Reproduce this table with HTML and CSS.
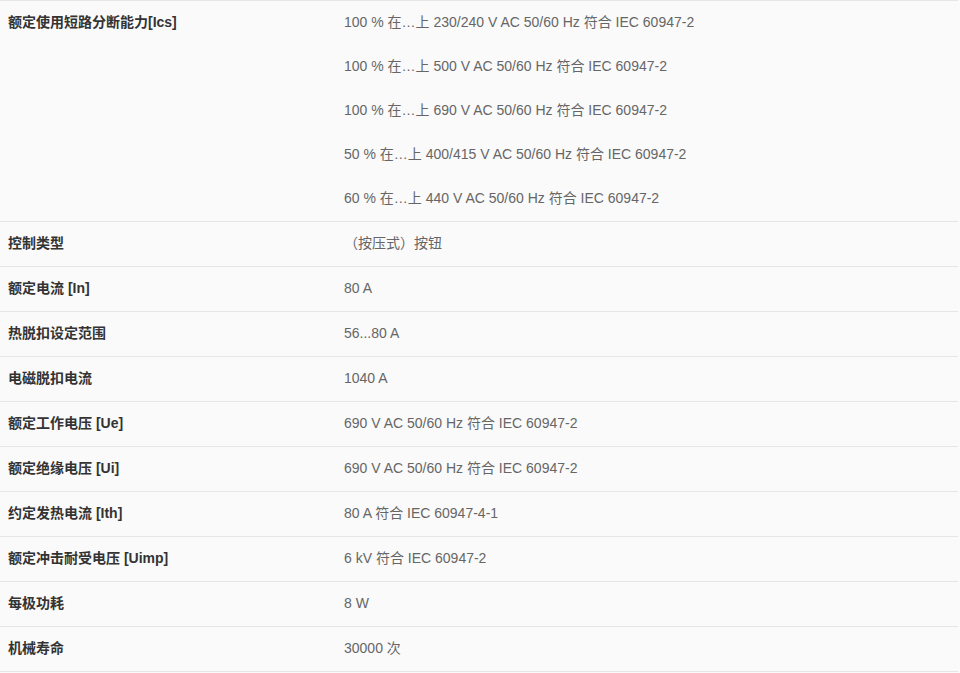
FILE: index.html
```html
<!DOCTYPE html>
<html lang="zh-CN">
<head>
<meta charset="utf-8">
<title>技术参数</title>
<link rel="stylesheet" href="styles.css">
</head>
<body>
<table class="specs">
  <tbody>
    <tr>
      <th>额定使用短路分断能力[Ics]</th>
      <td>
        <div class="val">100 % 在…上 230/240 V AC 50/60 Hz 符合 IEC 60947-2</div>
        <div class="val">100 % 在…上 500 V AC 50/60 Hz 符合 IEC 60947-2</div>
        <div class="val">100 % 在…上 690 V AC 50/60 Hz 符合 IEC 60947-2</div>
        <div class="val">50 % 在…上 400/415 V AC 50/60 Hz 符合 IEC 60947-2</div>
        <div class="val">60 % 在…上 440 V AC 50/60 Hz 符合 IEC 60947-2</div>
      </td>
    </tr>
    <tr><th>控制类型</th><td>（按压式）按钮</td></tr>
    <tr><th>额定电流 [In]</th><td>80 A</td></tr>
    <tr><th>热脱扣设定范围</th><td>56...80 A</td></tr>
    <tr><th>电磁脱扣电流</th><td>1040 A</td></tr>
    <tr><th>额定工作电压 [Ue]</th><td>690 V AC 50/60 Hz 符合 IEC 60947-2</td></tr>
    <tr><th>额定绝缘电压 [Ui]</th><td>690 V AC 50/60 Hz 符合 IEC 60947-2</td></tr>
    <tr><th>约定发热电流 [Ith]</th><td>80 A 符合 IEC 60947-4-1</td></tr>
    <tr><th>额定冲击耐受电压 [Uimp]</th><td>6 kV 符合 IEC 60947-2</td></tr>
    <tr><th>每极功耗</th><td>8 W</td></tr>
    <tr><th>机械寿命</th><td>30000 次</td></tr>
  </tbody>
</table>
</body>
</html>
```
FILE: styles.css
```css
html, body {
  margin: 0;
  padding: 0;
  background: #fafafa;
}
body {
  font-family: "Liberation Sans", Arial, "Noto Sans CJK SC", sans-serif;
  font-size: 14px;
  color: #333;
}
.specs {
  width: 958px;
  border-collapse: collapse;
  border-top: 1px solid #e6e6e6;
}
.specs th,
.specs td {
  padding: 11px 8px 13px;
  line-height: 20px;
  text-align: left;
  vertical-align: top;
  border-bottom: 1px solid #e6e6e6;
}
.specs th {
  width: 320px;
  font-weight: bold;
  color: #333;
}
.specs td {
  color: #666;
}
.val + .val {
  margin-top: 24px;
}
```
